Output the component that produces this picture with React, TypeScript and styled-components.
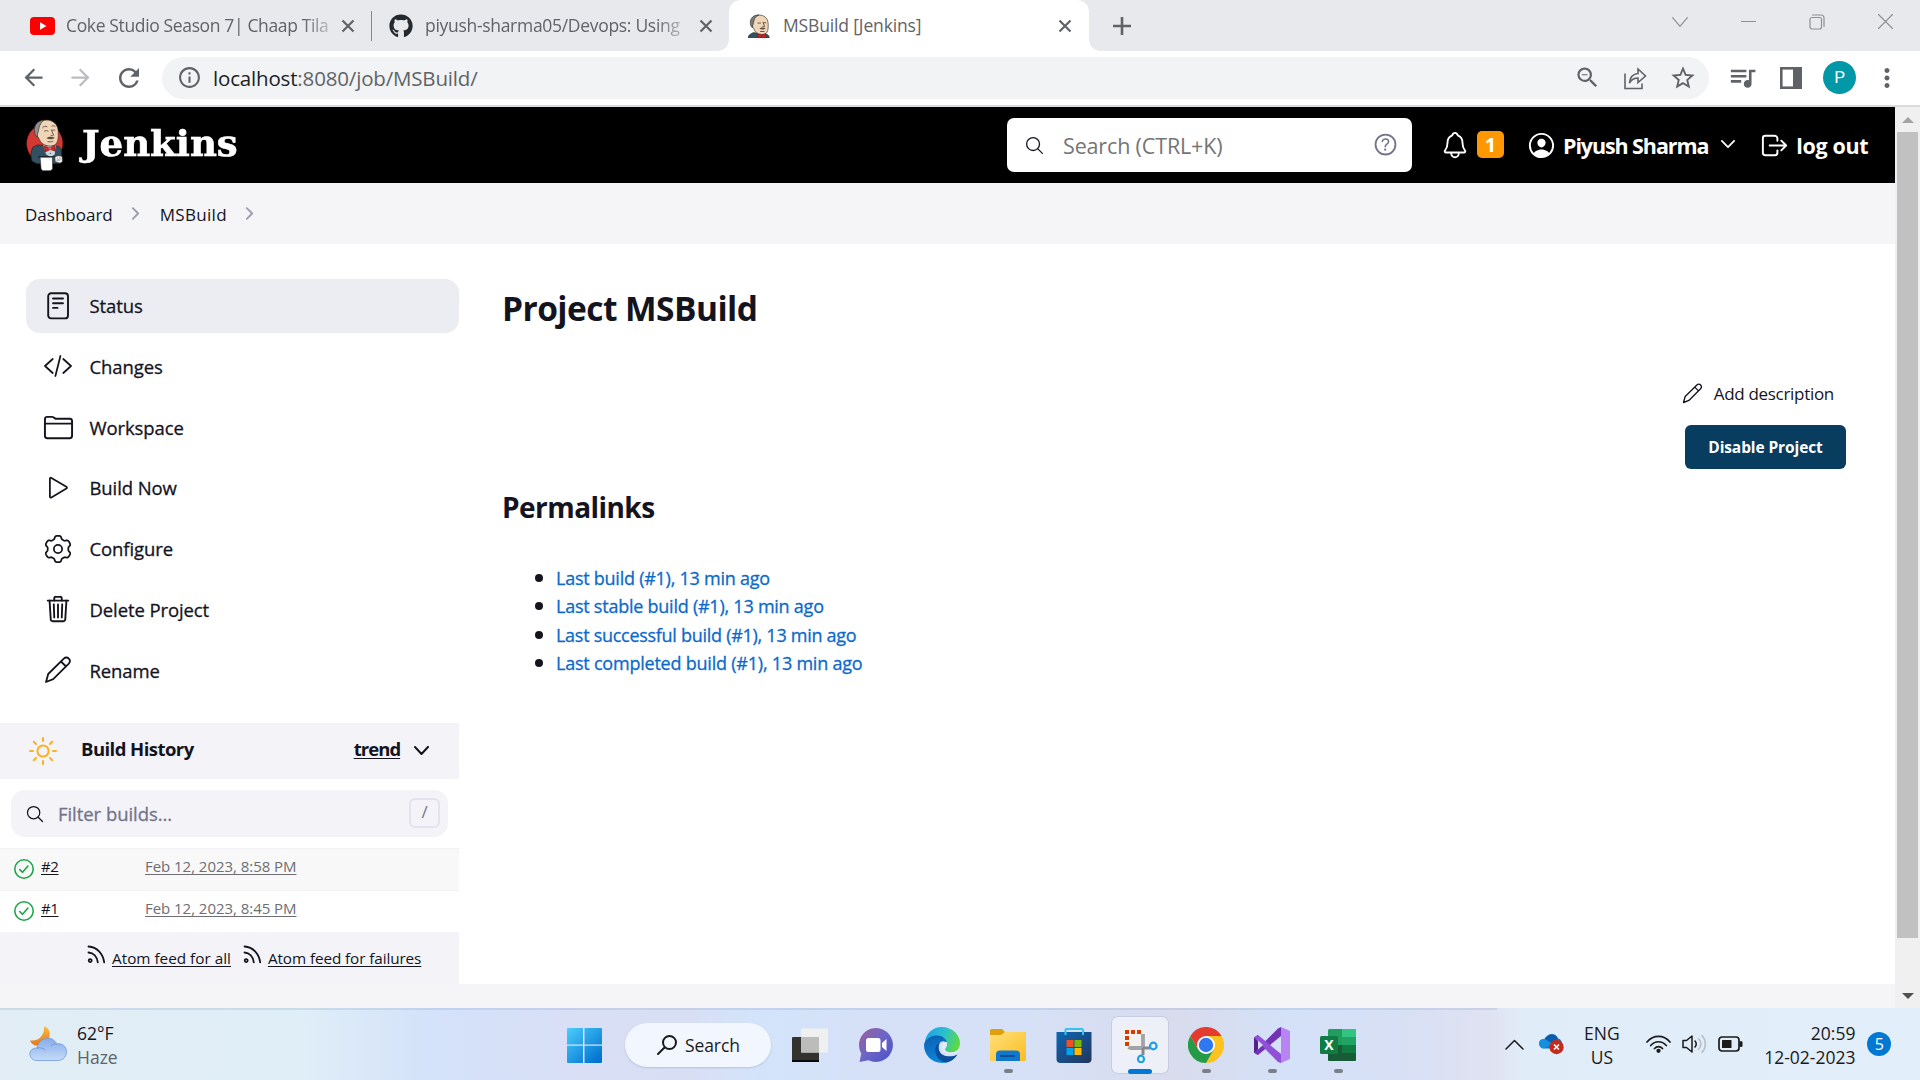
import React from 'react';
import styled, { createGlobalStyle } from 'styled-components';
import { IoFolderOutline, IoTrashOutline, IoSearchOutline, IoNotificationsOutline, IoPersonCircleOutline, IoLogOutOutline, IoHelpCircleOutline, IoChevronForward } from 'react-icons/io5';
import { MdArrowBack, MdArrowForward, MdRefresh, MdInfoOutline, MdStarBorder, MdQueueMusic, MdMoreVert, MdZoomOut } from 'react-icons/md';
import { FaGithub } from 'react-icons/fa';

const GlobalStyle = createGlobalStyle`
  * { box-sizing: border-box; }
  html, body { margin: 0; padding: 0; overflow: hidden; }
  body { font-family: "Open Sans", "Noto Sans", sans-serif; color: #14141f; background: #fff; }
  svg { display: block; flex: none; }
  a { color: inherit; }
`;

const Screen = styled.div`
  width: 1920px;
  height: 1080px;
  display: flex;
  flex-direction: column;
  overflow: hidden;
`;

interface LabelProps { $size: number; $weight?: number; $color?: string; $track?: number; $ml?: number; $mt?: number; $underline?: boolean; }
const Label = styled.span<LabelProps>`
  font-size: ${p => p.$size}px;
  font-weight: ${p => p.$weight ?? 400};
  color: ${p => p.$color ?? 'inherit'};
  letter-spacing: ${p => p.$track ?? 0}px;
  margin-left: ${p => p.$ml ?? 0}px;
  margin-top: ${p => p.$mt ?? 0}px;
  text-decoration: ${p => (p.$underline ? 'underline' : 'none')};
  text-decoration-thickness: 1px;
  text-underline-offset: 2px;
  white-space: nowrap;
  flex: none;
  ${p => p.$weight === 500 && '-webkit-text-stroke: .3px currentColor;'}
`;

const Slot = styled.span<{ $w: number; $ml?: number; $mt?: number }>`
  width: ${p => p.$w}px;
  margin-left: ${p => p.$ml ?? 0}px;
  margin-top: ${p => p.$mt ?? 0}px;
  flex: none;
  display: flex;
  align-items: center;
  justify-content: center;
`;

/* Browser chrome */
const TabStrip = styled.div`
  height: 51px;
  background: #e8e9ed;
  display: flex;
  color: #5f6368;
`;
const Tab = styled.div<{ $w: number; $pad: number; $active?: boolean }>`
  position: relative;
  width: ${p => p.$w}px;
  padding-left: ${p => p.$pad}px;
  display: flex;
  align-items: center;
  flex: none;
  background: ${p => (p.$active ? '#fff' : 'transparent')};
  border-radius: 12px 12px 0 0;
  &::before, &::after {
    content: '';
    display: ${p => (p.$active ? 'block' : 'none')};
    position: absolute;
    bottom: 0;
    width: 11px;
    height: 11px;
  }
  &::before { left: -11px; background: radial-gradient(circle at 0 0, transparent 10.5px, #fff 11px); }
  &::after { right: -11px; background: radial-gradient(circle at 100% 0, transparent 10.5px, #fff 11px); }
`;
const TabTitle = styled.div<{ $w: number; $ml: number; $track: number; $fade?: boolean }>`
  width: ${p => p.$w}px;
  margin-left: ${p => p.$ml}px;
  letter-spacing: ${p => p.$track}px;
  font-size: 17.5px;
  line-height: 27px;
  white-space: nowrap;
  flex: none;
  ${p => p.$fade && 'mask-image: linear-gradient(90deg, #000 89%, rgba(0,0,0,.25) 100%);'}
`;
const TabDivider = styled.i`
  width: 1px;
  height: 30px;
  margin-top: 11px;
  background: #85888c;
`;
const WindowControls = styled.div`
  margin-left: auto;
  height: 43px;
  padding-right: 27px;
  display: flex;
  align-items: center;
  gap: 53px;
  color: #8d9094;
`;
const Toolbar = styled.div`
  height: 56px;
  padding: 0 0 1px 20px;
  border-bottom: 2px solid #d9dadb;
  display: flex;
  align-items: center;
  color: #5f6368;
  background: #fff;
`;
const AddressBar = styled.div`
  width: 1547px;
  height: 42px;
  margin-left: 19px;
  padding-left: 13px;
  border-radius: 21px;
  background: #f1f3f4;
  display: flex;
  align-items: center;
  flex: none;
`;
const AddressIcons = styled.div`
  margin-left: auto;
  padding-right: 12px;
  display: flex;
  align-items: center;
  gap: 22px;
`;
const Avatar = styled.div`
  width: 33px;
  height: 33px;
  margin-left: 21px;
  border-radius: 50%;
  background: #0097a7;
  color: #fff;
  font: 17px/33px Roboto, sans-serif;
  text-align: center;
`;

/* Page viewport */
const Viewport = styled.div`
  height: 901px;
  display: flex;
`;
const Page = styled.div`
  width: 1895px;
  display: flex;
  flex-direction: column;
`;
const Header = styled.header`
  height: 76px;
  padding-left: 26px;
  background: #000;
  color: #fff;
  display: flex;
  align-items: center;
`;
const Wordmark = styled.span`
  width: 146px;
  margin: -3px 0 0 18px;
  font: 700 34.5px/50px "DejaVu Serif", serif;
  -webkit-text-stroke: .6px #fff;
  transform: scaleX(1.075);
  transform-origin: 0 50%;
`;
const SearchBox = styled.div`
  width: 405px;
  height: 54px;
  margin-left: auto;
  padding: 0 13px 0 17px;
  border-radius: 7px;
  background: #fff;
  color: #14141f;
  display: flex;
  align-items: center;
`;
const AccountBar = styled.div`
  width: 483px;
  padding-left: 29px;
  display: flex;
  align-items: center;
`;
const AlertBadge = styled.span`
  width: 27px;
  height: 27px;
  margin: -1px 0 0 8px;
  border-radius: 5px;
  background: #ff9800;
  font-size: 20px;
  font-weight: 700;
  line-height: 28px;
  text-align: center;
`;
const Breadcrumbs = styled.nav`
  height: 61px;
  padding: 1px 0 0 25px;
  background: #f5f5f8;
  display: flex;
  align-items: center;
`;
const Body = styled.div`
  height: 740px;
  display: flex;
`;
const PageFooter = styled.div`
  flex: 1;
  background: #f5f5f7;
`;

/* Side panel */
const SidePanel = styled.aside`
  width: 459px;
  padding-top: 35px;
  display: flex;
  flex-direction: column;
  flex: none;
`;
const TaskList = styled.div`
  height: 444px;
  padding-left: 26px;
  display: flex;
  flex-direction: column;
  gap: 6.8px;
`;
const Task = styled.a<{ $active?: boolean }>`
  width: 433px;
  height: 54px;
  padding-left: 18px;
  border-radius: 14px;
  background: ${p => (p.$active ? '#ecedf2' : 'transparent')};
  display: flex;
  align-items: center;
  flex: none;
`;
const HistoryHead = styled.div`
  height: 56px;
  padding: 0 31px 0 29px;
  background: #f3f3f8;
  display: flex;
  align-items: center;
  flex: none;
`;
const Filter = styled.div`
  width: 437px;
  height: 47px;
  margin: 11px;
  padding: 0 8px 0 14px;
  border-radius: 14px;
  background: #f3f3f8;
  display: flex;
  align-items: center;
  flex: none;
`;
const KeyHint = styled.kbd`
  width: 31px;
  height: 30px;
  margin: -1px 0 0 auto;
  border: 2px solid #e4e2ef;
  border-radius: 6px;
  color: #73738c;
  font: 500 17px/24px "Open Sans", sans-serif;
  text-align: center;
`;
const BuildRow = styled.div<{ $shade?: boolean }>`
  height: 42px;
  padding: 0 0 4px 14px;
  border-top: 1px solid #f2f2f4;
  background: ${p => (p.$shade ? '#f8f8f8' : '#fff')};
  display: flex;
  align-items: center;
  flex: none;
  svg { margin-top: 2px; }
`;
const BuildNumber = styled.div`
  width: 111px;
  padding-left: 7px;
  margin-top: -3px;
  line-height: 22px;
`;
const FeedBar = styled.div`
  height: 52px;
  padding-left: 87px;
  background: #f3f3f8;
  display: flex;
  align-items: center;
  flex: none;
`;

/* Main panel */
const MainPanel = styled.main`
  flex: 1;
  padding: 40px 49px 0 43px;
  display: flex;
  flex-direction: column;
`;
const Title = styled.h1`
  margin: 0;
  height: 50px;
  font-size: 33.5px;
  line-height: 49px;
  font-weight: 700;
  letter-spacing: -.55px;
`;
const Actions = styled.div`
  height: 135px;
  padding-top: 42px;
  display: flex;
  flex-direction: column;
  align-items: flex-end;
`;
const AddDescription = styled.a`
  height: 34px;
  padding-right: 12px;
  display: flex;
  align-items: center;
`;
const DisableButton = styled.button`
  width: 161px;
  height: 44px;
  margin-top: 15px;
  padding: 0;
  border: 0;
  border-radius: 6px;
  background: #083d60;
  color: #fff;
  font: 700 15.5px/44px "Open Sans", sans-serif;
  letter-spacing: -.1px;
  flex: none;
`;
const Subtitle = styled.h2`
  margin: 18px 0 1px;
  font-size: 28px;
  line-height: 40px;
  font-weight: 700;
  letter-spacing: -.55px;
`;
const Permalinks = styled.ul`
  margin: 36px 0 0;
  padding: 0 0 0 33px;
  list-style: none;
`;
const Permalink = styled.li`
  height: 28.3px;
  display: flex;
  align-items: center;
  &::before { content: ''; width: 8px; height: 8px; margin-right: 13px; border-radius: 50%; background: #14141f; }
`;

/* Scroll bar */
const ScrollTrack = styled.div`
  width: 25px;
  padding: 10px 0 9px;
  background: #f0f0f0;
  display: flex;
  flex-direction: column;
  align-items: center;
`;
const ScrollThumb = styled.div`
  width: 21px;
  height: 806px;
  margin-top: 9px;
  margin-bottom: auto;
  background: #c1c1c1;
`;

/* Taskbar */
const Taskbar = styled.footer`
  position: relative;
  height: 72px;
  display: flex;
  background: linear-gradient(90deg, #e2edf5 0, #dfeef7 300px, #d4e2fa 430px, #d8dff6 560px, #d8dff5 690px, #d3e4fa 760px, #d6e0f7 880px, #d6e1f8 1000px, #d8dced 1180px, #d4e1f8 1290px, #d8e0f5 1400px, #dfe2f1 1490px, #e0ecf7 1520px, #e2eef9 100%);
  &::before { content: ''; position: absolute; left: 0; top: 0; width: 1497px; height: 2px; background: rgba(120, 145, 190, .2); }
`;
const Weather = styled.div`
  width: 536px;
  padding-left: 29px;
  display: flex;
  align-items: center;
`;
const Stack = styled.div<{ $ml?: number; $align?: string }>`
  margin-left: ${p => p.$ml ?? 0}px;
  padding-top: 2px;
  display: flex;
  flex-direction: column;
  align-items: ${p => p.$align ?? 'flex-start'};
  line-height: 24px;
`;
const Apps = styled.div`
  width: 960px;
  padding-left: 15px;
  display: flex;
  align-items: center;
`;
const AppCell = styled.div<{ $active?: boolean; $mark?: boolean }>`
  position: relative;
  width: 56px;
  height: 56px;
  margin: 2px 5px 0;
  border-radius: 6px;
  flex: none;
  display: flex;
  align-items: center;
  justify-content: center;
  background: ${p => (p.$active ? 'rgba(255,255,255,.55)' : 'transparent')};
  box-shadow: ${p => (p.$active ? '0 0 0 1px rgba(160,170,200,.3)' : 'none')};
  &::after {
    content: '';
    position: absolute;
    bottom: ${p => (p.$active ? -1 : 0)}px;
    display: ${p => (p.$mark ? 'block' : 'none')};
    width: ${p => (p.$active ? 24 : 9)}px;
    height: ${p => (p.$active ? 5 : 4)}px;
    border-radius: 3px;
    background: ${p => (p.$active ? '#0078d4' : '#7b7f8a')};
  }
`;
const SearchPill = styled.div`
  width: 146px;
  height: 44px;
  margin: 2px 6px 0 8px;
  padding-left: 32px;
  border-radius: 22px;
  background: #f2f6fe;
  box-shadow: 0 1px 2px rgba(120, 135, 180, .35);
  display: flex;
  align-items: center;
  color: #1b1b1b;
  flex: none;
`;
const Tray = styled.div`
  flex: 1;
  padding: 0 20px 0 9px;
  display: flex;
  align-items: center;
  color: #1b1b1b;
`;
const NoticeCount = styled.span`
  width: 24px;
  height: 24px;
  margin-left: 12px;
  border-radius: 50%;
  background: #0078d4;
  color: #fff;
  font-size: 16px;
  line-height: 24px;
  text-align: center;
`;

const Butler = ({ w, h, box }: { w: number; h: number; box: string }) => (
  <svg width={w} height={h} viewBox={box}>
    <ellipse cx="18.700" cy="25" rx="18.500" ry="19.500" fill="#d33833" stroke="#3a1210" strokeWidth=".5" />
    <path d="M11 26.500 6.500 29c-2 4-2 9-1.200 13 1.500 2 4 3 6.500 3.500H33c2-3 3.500-8 3-13-.5-2.500-2-4.500-5-5z" fill="#335061" stroke="#1a2229" strokeWidth=".7" />
    <path d="M21 27.500 17 26l3 10 5 3 4-3 1-9z" fill="#c9d6dc" />
    <path d="M12 4C15.500.8 22 .2 26.500 2.500c4.500 2.500 6 6.500 6 11 .2 4.500 0 8-1.500 10.800-1.500 2.700-4.500 3.500-8 3.200-5-.4-9-3.500-10.500-8.500-1-.8-2.500-3.500-1.500-5z" fill="#f0d6b7" stroke="#3d3129" strokeWidth=".7" />
    <path d="M18 1.200C11.500 1.500 8.300 6 8.200 11c0 3 .8 6 2.800 7.500.4-1.800.2-3.500.9-4.800.8-2.200.6-4.500 1.800-7C14.700 4.300 16 2.700 18 1.200z" fill="#8f8f90" stroke="#333" strokeWidth=".7" />
    <path d="M16.500 9c1.500-1.800 3-2 4.500-1.200M26 7.200c1-.6 2.200-.4 3.200.4M18.500 12.300c1.200-.6 2.400-.6 3.600 0M26.500 11.500c.9-.4 1.800-.3 2.600 0M25.500 11l2.200 5.500c-.6.6-1.600.6-2.600.2M22 23c1.800.6 3.500.5 5-.3" fill="none" stroke="#4a3a30" strokeWidth=".8" strokeLinecap="round" />
    <path d="M20.500 19.500c2-1.700 5.500-2 8.500-.5-2 1.700-5 2.200-8.500.5z" fill="#5b5048" />
    <path d="M18 27.300l5.500 2 5.500-2.300.6 5.800-5-1.600-5.400 2.300z" fill="#d81f26" stroke="#5b1013" strokeWidth=".5" />
    <circle cx="24" cy="30" r="1.500" fill="#f0524f" /><circle cx="24.500" cy="35" r=".7" fill="#335061" />
    <path d="M12 38.500h18" stroke="#14232e" strokeWidth="1.200" />
    <path d="M14 39h12.500l.3 12-2.300 1.700h-7.800L15 51z" fill="#fff" stroke="#262626" strokeWidth=".6" />
    <path d="M29 38.500c2.500-1.500 6-1.500 7.500 0l.3 5-2.500 1.500-5-1.500z" fill="#f3f1ee" stroke="#303030" strokeWidth=".7" />
    <path d="M31.500 39.500l1 2M34 39l.5 2.500M30.500 42h4" stroke="#777" strokeWidth=".6" />
  </svg>
);
/* Head and bow tie only, without the red backdrop */
const ButlerFavicon = () => (
  <svg width="22" height="24" viewBox="5 0 30 32">
    <path d="M12 25 7 28c-1.500 1.500-2 3-2 5h29c0-3-1-5-4-6z" fill="#335061" stroke="#1a2229" strokeWidth=".7" />
    <path d="M12 4C15.500.8 22 .2 26.500 2.500c4.500 2.500 6 6.500 6 11 .2 4.500 0 8-1.500 10.800-1.500 2.700-4.500 3.500-8 3.200-5-.4-9-3.500-10.500-8.500-1-.8-2.500-3.500-1.500-5z" fill="#f0d6b7" stroke="#3d3129" strokeWidth=".9" />
    <path d="M20 1C11.500 1 8.300 6 8.200 11c0 3 .8 6 2.800 7.500.4-1.800.2-3.500.9-4.800.8-2.200.6-4.500 1.800-7C14.700 4.300 17 2.500 20 1z" fill="#7b7b7c" stroke="#333" strokeWidth=".9" />
    <path d="M18.500 12h3.600M26.500 11.500h2.600M25.500 11l2.200 5.500c-.6.600-1.600.6-2.600.2M22 23.500h5" fill="none" stroke="#4a3a30" strokeWidth="1.100" strokeLinecap="round" />
    <path d="M20.500 19.800c2-2 5.500-2.300 8.500-.6-2 1.900-5 2.400-8.500.6z" fill="#5b5048" />
    <path d="M18 26.500l5.500 2.200 5.500-2.500.8 6.300-5-1.600-6 1.600z" fill="#d81f26" stroke="#5b1013" strokeWidth=".5" />
  </svg>
);

const YouTube = () => (
  <svg width="25" height="18" viewBox="0 0 25 18"><rect width="25" height="18" rx="4" fill="#f00" /><path d="M10 5.200v7.600L16.500 9z" fill="#fff" /></svg>
);

const line = { fill: 'none', stroke: 'currentColor', strokeLinecap: 'round', strokeLinejoin: 'round' } as const;

const CloseIcon = () => (
  <svg width="14" height="14" viewBox="0 0 14 14" {...line} strokeLinecap="butt" strokeWidth="2.200"><path d="M1.500 1.500l11 11M12.500 1.500l-11 11" /></svg>
);
const PlusIcon = () => (
  <svg width="18" height="18" viewBox="0 0 18 18" {...line} strokeWidth="2.600" strokeLinecap="butt"><path d="M9 0v18M0 9h18" /></svg>
);
const StatusIcon = () => (
  <svg width="28" height="28" viewBox="0 0 28 28" {...line} strokeWidth="1.900"><rect x="4.200" y="1.200" width="19.800" height="25.200" rx="3" /><path d="M9 6.500h10M9 11.200h10M9 15.900h4.500" /></svg>
);
const CodeIcon = () => (
  <svg width="28" height="28" viewBox="0 0 28 28" {...line} strokeWidth="1.750"><path d="M8.700 7 1 14l7.700 7M19.300 7 27 14l-7.700 7M16.400 4l-5 20" /></svg>
);
const PlayIcon = () => (
  <svg width="28" height="28" viewBox="0 0 28 28" {...line} strokeWidth="1.750"><path d="M5.900 4.700v18c0 .8.800 1.200 1.500.8l15-8.900c.7-.4.700-1.400 0-1.800l-15-8.900c-.7-.4-1.500 0-1.500.8z" /></svg>
);
const gearPath = Array.from({ length: 121 }, (_, i) => {
  const t = (i / 120) * Math.PI * 2;
  const r = 11.7 + 1.45 * (Math.tanh(2.2 * Math.cos(6 * t) + 0.3) / Math.tanh(2.5));
  return `${i ? 'L' : 'M'}${(14 + r * Math.sin(t)).toFixed(2)} ${(14 - r * Math.cos(t)).toFixed(2)}`;
}).join('') + 'Z';
const GearIcon = () => (
  <svg width="28" height="28" viewBox="0 0 28 28" {...line} strokeWidth="1.750"><path d={gearPath} /><circle cx="14" cy="14" r="4.100" /></svg>
);
const PencilIcon = ({ size = 28 }: { size?: number }) => (
  <svg width={size} height={size} viewBox="0 0 28 28" {...line} strokeWidth="1.800"><path d="M2 26l2.200-8L19.800 2.600c1.500-1.500 3.600-1.500 5 0s1.400 3.500 0 5L9.200 23.200zM17 5.500l5 5" /></svg>
);
const SunIcon = () => (
  <svg width="28" height="28" viewBox="0 0 28 28" {...line} stroke="#ffb020" strokeWidth="2"><circle cx="14" cy="14" r="5.600" /><path d="M14 1v3M14 24v3M1 14h3M24 14h3M4.800 4.800l2.200 2.200M21 21l2.200 2.200M4.800 23.200 7 21M21 7l2.200-2.200" /></svg>
);
const Chevron = ({ w, h, sw }: { w: number; h: number; sw: number }) => (
  <svg width={w} height={h} viewBox={`0 0 ${w} ${h}`} {...line} strokeWidth={sw}><path d={`M${sw / 2} ${sw / 2}L${w / 2} ${h - sw / 2}L${w - sw / 2} ${sw / 2}`} /></svg>
);
const CheckIcon = () => (
  <svg width="20" height="20" viewBox="0 0 20 20" {...line} stroke="#1ea64b" strokeWidth="1.600"><circle cx="10" cy="10" r="9.200" /><path d="M5.800 10.600l2.800 2.700 5.300-6.300" /></svg>
);
const FeedIcon = () => (
  <svg width="19" height="19" viewBox="0 0 19 19" {...line} strokeWidth="1.800"><circle cx="3.200" cy="15.600" r="1.500" /><path d="M1.500 7.500c5 .3 8.600 4.300 9.300 9.800M1.500 1.500C10 2 16 8.500 17.200 17.300" /></svg>
);

const CloudMoon = () => (
  <svg width="38" height="36" viewBox="0 0 38 36">
    <defs>
      <linearGradient id="cloud" x1="0" y1="0" x2="0" y2="1"><stop offset="0" stopColor="#86abe8" /><stop offset="1" stopColor="#c5dcf9" /></linearGradient>
      <linearGradient id="moon" x1="0" y1="0" x2="0" y2="1"><stop offset="0" stopColor="#f9bc3c" /><stop offset="1" stopColor="#e7791b" /></linearGradient>
    </defs>
    <path d="M15 .5c5 1 7 6.500 5 11.500-2.500 6-10 9-15 7C3 18 1.500 16 1 14.500c5 .5 9-1 11.500-4.500C14.500 7 15.500 4 15 .5z" fill="url(#moon)" />
    <path d="M8 34.500c-9.500 0-9.500-13 0-12.500C10 10.500 24 9 27.500 18 40 15.500 41 34 29 34.500z" fill="url(#cloud)" stroke="#6f97dc" strokeWidth=".8" />
    <path d="M8 22c4-.5 6 0 8.500 2.500M22 20c2-2 3-2.500 6-2" fill="none" stroke="#7298dc" />
  </svg>
);
const WindowsLogo = () => (
  <svg width="36" height="36" viewBox="0 0 36 36">
    <defs><linearGradient id="win" gradientUnits="userSpaceOnUse" x1="0" y1="0" x2="32" y2="34"><stop offset="0" stopColor="#4fd0fd" /><stop offset="1" stopColor="#0073d0" /></linearGradient></defs>
    <path d="M1 2a1 1 0 0 1 1-1h15v16.500H1zM18.500 1H35a1 1 0 0 1 1 1v15.500H18.500zM1 18.700h16V36H2a1 1 0 0 1-1-1zM18.500 18.700H36V35a1 1 0 0 1-1 1H18.500z" fill="url(#win)" />
  </svg>
);
const TaskView = () => (
  <svg width="36" height="34" viewBox="0 0 36 34"><rect y="9" width="27" height="25" rx="1" fill="#33322f" /><rect y="32" width="27" height="2" fill="#0a0a0a" /><rect x="9" y=".5" width="27" height="24" rx="1" fill="#f0f0f0" /><rect x="9" y="9" width="18" height="15.500" fill="#bcbcba" /></svg>
);
const ChatIcon = () => (
  <svg width="36" height="36" viewBox="0 0 36 36">
    <defs><linearGradient id="chat" x1=".1" y1=".2" x2=".8" y2=".9"><stop offset="0" stopColor="#9060a8" /><stop offset=".45" stopColor="#6f66c6" /><stop offset="1" stopColor="#5257c8" /></linearGradient></defs>
    <path d="M18 1a17 17 0 1 1-7.500 32.300L1.500 35l1.800-8.500A17 17 0 0 1 18 1z" fill="url(#chat)" />
    <rect x="8" y="11" width="14.500" height="14" rx="2.500" fill="#fff" /><path d="M24 16l4.500-4v12L24 20z" fill="#fff" />
  </svg>
);
const EdgeIcon = () => (
  <svg width="36" height="36" viewBox="0 0 36 36">
    <defs>
      <linearGradient id="edgeTop" x1="0" y1=".3" x2="1" y2=".6"><stop offset="0" stopColor="#1aa2e8" /><stop offset=".5" stopColor="#2cc0cc" /><stop offset="1" stopColor="#5fdb3c" /></linearGradient>
      <linearGradient id="edgeBody" x1="0" y1="0" x2=".4" y2="1"><stop offset="0" stopColor="#0d5fb0" /><stop offset="1" stopColor="#0a88e0" /></linearGradient>
    </defs>
    <path d="M.6 16C2 6 9 0 18 0c10.500 0 18 8 18 16 0 6-4 9.500-9 9.500-5.500 0-7-2.500-5.500-4.500C24 17 20 12 14 12 8 12 3 14 .6 16z" fill="url(#edgeTop)" />
    <path d="M.1 17C2 11 8 8.500 13 8.500c6 0 9 3.500 9.800 6.500-7-2.500-9 3-8 7C16 29 24 32.500 33 28c-3 5-8.500 8-15 8C7 36-.6 27 .1 17z" fill="url(#edgeBody)" />
    <path d="M12 19c-3 8 3 16 10 16.500 5-1 9-4 11.500-8C27 31 15 30 14.500 21c0-2 .5-4 1.500-5-2 .5-3.300 1.500-4 3z" fill="#0b4f9c" />
    <path d="M22.700 15c1 2.500.3 4.500-1.200 6-1.500 2 .5 4.500 5.500 4.500 2.500 0 4.600-.8 7.200-2.200-1 3.300-3.500 3.700-7.200 3.700-6 0-9-3-9-7 0-2.500 2-5 4.700-5z" fill="#e3ebfb" />
  </svg>
);
const FolderIcon = () => (
  <svg width="36" height="34" viewBox="0 0 36 34">
    <defs><linearGradient id="folder" x1="0" y1="0" x2="1" y2="1"><stop offset="0" stopColor="#ffe07a" /><stop offset="1" stopColor="#fbbd24" /></linearGradient></defs>
    <path d="M0 2.500A1.500 1.500 0 0 1 1.500 1H12l3 3h19.500A1.500 1.500 0 0 1 36 5.500V20H0z" fill="#dfa00c" /><path d="M0 7h11l4-3h19.500A1.500 1.500 0 0 1 36 5.500V32a1 1 0 0 1-1 1H1a1 1 0 0 1-1-1z" fill="url(#folder)" />
    <path d="M6 33V26.500a4 4 0 0 1 4-4h16a4 4 0 0 1 4 4V33z" fill="#0f78cc" /><rect x="10" y="27" width="15" height="2" rx="1" fill="#0a4f92" />
  </svg>
);
const StoreIcon = () => (
  <svg width="36" height="36" viewBox="0 0 36 36">
    <defs><linearGradient id="store" x1="0" y1="0" x2="1" y2="1"><stop offset="0" stopColor="#0c66b4" /><stop offset="1" stopColor="#24365c" /></linearGradient></defs>
    <path d="M.5 5h35v27a4 4 0 0 1-4 4h-27a4 4 0 0 1-4-4z" fill="url(#store)" />
    <path d="M9.500 8V3a1 1 0 0 1 1-1H26a1 1 0 0 1 1 1v5" fill="none" stroke="#35c3f3" strokeWidth="2" />
    <path d="M10.500 13h7v7h-7z" fill="#f25022" /><path d="M18.500 13h7v7h-7z" fill="#7fba00" /><path d="M10.500 21h7v7h-7z" fill="#00a4ef" /><path d="M18.500 21h7v7h-7z" fill="#ffb900" />
  </svg>
);
const SnipIcon = () => (
  <svg width="36" height="36" viewBox="0 0 36 36">
    <rect width="26" height="26" y="1" fill="#f1f1f2" rx="2" />
    <path d="M3 3h4v4H3zM9 3h4v4H9zM15 3h4v4h-4zM3 9h4v4H3zM3 15h4v4H3z" fill="#d83b01" />
    <path d="M21 7v14.500M21 21H9c-1 0-2-.5-2.500-1" fill="none" stroke="#a0a3a8" strokeWidth="3.800" /><path d="M21 21v7M21 21h7" stroke="#85898f" strokeWidth="3" />
    <circle cx="31.300" cy="19" r="3.300" fill="none" stroke="#1ba0e6" strokeWidth="2.200" /><ellipse cx="19" cy="32" rx="3" ry="3.300" fill="none" stroke="#1ba0e6" strokeWidth="2.200" />
  </svg>
);
const ChromeIcon = () => (
  <svg width="36" height="36" viewBox="0 0 36 36">
    <path d="M2.400 9A18 18 0 0 1 33.600 9H18z" fill="#e33b2e" /><path d="M33.600 9A18 18 0 0 1 18 36l7.800-13.500L25.800 9z" fill="#fcc31e" /><path d="M2.400 9A18 18 0 0 0 18 36l7.800-13.500L10.200 22.500z" fill="#259a47" />
    <path d="M2.400 9 10.200 22.500 18 9z" fill="#e33b2e" /><path d="M18 9h16l-8 14z" fill="#fcc31e" /><circle cx="18" cy="18" r="9" fill="#fff" /><circle cx="18" cy="18" r="7.200" fill="#2f78f0" />
  </svg>
);
const StudioIcon = () => (
  <svg width="36" height="36" viewBox="0 0 36 36">
    <path d="M0 10.500 4 8v20l-4-2.500z" fill="#52218f" /><path d="M0 25.500 24 1.500 27 0v9L4 28z" fill="#7233b5" /><path d="M0 10.500 4 8l23 19v9l-3-1z" fill="#9150d8" /><path d="M27 0l9 4v28l-9 4z" fill="#b884f2" />
    <path d="M4 13.500v9L9 18z" fill="#d7def3" />
  </svg>
);
const ExcelIcon = () => (
  <svg width="36" height="36" viewBox="0 0 36 36">
    <rect x="8" y="2" width="28" height="32" rx="1.500" fill="#1f9e5f" /><path d="M22 2h12.500A1.500 1.500 0 0 1 36 3.500V10H22z" fill="#33c481" /><path d="M8 18h28v14.500a1.500 1.500 0 0 1-1.500 1.500h-25A1.500 1.500 0 0 1 8 32.500z" fill="#185c37" /><path d="M22 18h14v8H22z" fill="#107c41" /><path d="M22 10h14v8H22z" fill="#21a366" />
    <rect y="9" width="18" height="18" rx="1.500" fill="#107c41" /><text x="9" y="23" fill="#fff" fontFamily="Open Sans, sans-serif" fontSize="14" fontWeight="700" textAnchor="middle">X</text>
  </svg>
);

const tasks: [string, React.ReactNode][] = [
  ['Status', <StatusIcon />],
  ['Changes', <CodeIcon />],
  ['Workspace', <IoFolderOutline size={31} />],
  ['Build Now', <PlayIcon />],
  ['Configure', <GearIcon />],
  ['Delete Project', <IoTrashOutline size={30} />],
  ['Rename', <PencilIcon />],
];
const permalinks: [string, number][] = [
  ['Last build (#1), 13 min ago', -0.25],
  ['Last stable build (#1), 13 min ago', -0.24],
  ['Last successful build (#1), 13 min ago', -0.28],
  ['Last completed build (#1), 13 min ago', -0.22],
];
const builds = [
  { n: '#2', date: 'Feb 12, 2023, 8:58 PM' },
  { n: '#1', date: 'Feb 12, 2023, 8:45 PM' },
];

export default function App() {
  return (
    <Screen>
      <GlobalStyle />
      <TabStrip>
        <Tab $w={371} $pad={30}>
          <YouTube />
          <TabTitle $w={266} $ml={11} $track={-0.36} $fade>Coke Studio Season 7| Chaap Tila</TabTitle>
          <Slot $w={20} $ml={6}><CloseIcon /></Slot>
        </Tab>
        <TabDivider />
        <Tab $w={357} $pad={17}>
          <FaGithub size={24} color="#24292f" />
          <TabTitle $w={260} $ml={12} $track={-0.3} $fade>piyush-sharma05/Devops: Using</TabTitle>
          <Slot $w={20} $ml={11}><CloseIcon /></Slot>
        </Tab>
        <Tab $w={360} $pad={19} $active>
          <ButlerFavicon />
          <TabTitle $w={262} $ml={13} $track={-0.15}>MSBuild [Jenkins]</TabTitle>
          <Slot $w={20} $ml={10}><CloseIcon /></Slot>
        </Tab>
        <Slot $w={30} $ml={18}><PlusIcon /></Slot>
        <WindowControls>
          <Chevron w={16} h={10} sw={1.2} />
          <svg width="15" height="15" viewBox="0 0 15 15" {...line} strokeWidth="1.200"><path d="M0 7.500h15" /></svg>
          <svg width="16" height="16" viewBox="0 0 16 16" {...line} strokeWidth="1.200"><rect x="1" y="3.500" width="11.500" height="11.500" rx="2" /><path d="M3.500 1h8.500a3 3 0 0 1 3 3v8.500" /></svg>
          <svg width="15" height="15" viewBox="0 0 15 15" {...line} strokeWidth="1.200"><path d="M.5.500l14 14M14.500.500l-14 14" /></svg>
        </WindowControls>
      </TabStrip>
      <Toolbar>
        <Slot $w={26}><MdArrowBack size={27} /></Slot>
        <Slot $w={26} $ml={21}><MdArrowForward size={27} color="#bbbdbf" /></Slot>
        <Slot $w={28} $ml={22}><MdRefresh size={30} /></Slot>
        <AddressBar>
          <Slot $w={28}><MdInfoOutline size={25} /></Slot>
          <Label $size={20.5} $ml={10} $track={-0.17} $color="#202124">localhost</Label><Label $size={20.5} $track={-0.17}>:8080/job/MSBuild/</Label>
          <AddressIcons>
            <MdZoomOut size={27} />
            <svg width="24" height="24" viewBox="0 0 24 24" {...line} strokeWidth="1.600" strokeLinejoin="miter"><path d="M2 8v14.500h17V18M6.500 17c.5-6 3.500-9 8.500-9.500V3l7.500 7-7.500 6.500v-4.500c-4 0-6.500 1.500-8.500 5z" /></svg>
            <MdStarBorder size={28} />
          </AddressIcons>
        </AddressBar>
        <Slot $w={30} $ml={18}><MdQueueMusic size={31} /></Slot>
        <Slot $w={22} $ml={23}><svg width="22" height="22" viewBox="0 0 22 22"><rect x="1.300" y="1.300" width="19.400" height="19.400" fill="none" stroke="currentColor" strokeWidth="2.600" /><rect x="13" y="1" width="8" height="20" fill="currentColor" /></svg></Slot>
        <Avatar>P</Avatar>
        <Slot $w={28} $ml={17}><MdMoreVert size={30} /></Slot>
      </Toolbar>
      <Viewport>
        <Page>
          <Header>
            <Butler w={38} h={53} box="0 0 38 54" />
            <Wordmark>Jenkins</Wordmark>
            <SearchBox>
              <IoSearchOutline size={21} />
              <Label $size={21.5} $ml={18} $track={-0.15} $color="#757575">Search (CTRL+K)</Label>
              <Slot $w={28} $ml={149} $mt={-1}><IoHelpCircleOutline size={29} color="#73738c" /></Slot>
            </SearchBox>
            <AccountBar>
              <Slot $w={28}><IoNotificationsOutline size={30} /></Slot>
              <AlertBadge>1</AlertBadge>
              <Slot $w={28} $ml={23}><IoPersonCircleOutline size={31} /></Slot>
              <Label $size={21.5} $weight={700} $ml={8} $track={-1.1}>Piyush Sharma</Label>
              <Slot $w={14} $ml={13} $mt={-2}><Chevron w={14} h={8} sw={1.7} /></Slot>
              <Slot $w={29} $ml={25}><IoLogOutOutline size={31} /></Slot>
              <Label $size={21.5} $weight={700} $ml={7} $track={-0.35}>log out</Label>
            </AccountBar>
          </Header>
          <Breadcrumbs>
            <Label $size={17}>Dashboard</Label>
            <Slot $w={16} $ml={15} $mt={-2}><IoChevronForward size={19} color="#9a9ab0" /></Slot>
            <Label $size={17} $ml={16} $track={0.3}>MSBuild</Label>
            <Slot $w={16} $ml={15} $mt={-2}><IoChevronForward size={19} color="#9a9ab0" /></Slot>
          </Breadcrumbs>
          <Body>
            <SidePanel>
              <TaskList>
                {tasks.map(([name, icon], i) => (
                  <Task key={name} $active={i === 0}>
                    <Slot $w={28} $mt={-1}>{icon}</Slot>
                    <Label $size={18.5} $weight={500} $ml={17.5} $mt={-1} $track={-0.1}>{name}</Label>
                  </Task>
                ))}
              </TaskList>
              <HistoryHead>
                <SunIcon />
                <Label $size={18.5} $weight={700} $ml={24} $mt={-6} $track={-0.55}>Build History</Label>
                <Label $size={18.5} $weight={700} $ml={160} $mt={-6} $track={-0.95} $underline>trend</Label>
                <Slot $w={15} $ml={14} $mt={-1}><Chevron w={15} h={9} sw={2} /></Slot>
              </HistoryHead>
              <Filter>
                <IoSearchOutline size={20} />
                <Label $size={18.5} $weight={500} $color="#73738c" $ml={13} $track={-0.05}>Filter builds...</Label>
                <KeyHint>/</KeyHint>
              </Filter>
              {builds.map((b, i) => (
                <BuildRow key={b.n} $shade={i === 0}>
                  <CheckIcon />
                  <BuildNumber><Label $size={15} $track={-0.4} $underline>{b.n}</Label></BuildNumber>
                  <Label $size={15} $mt={-3} $color="#6e6e73" $track={-0.04} $underline>{b.date}</Label>
                </BuildRow>
              ))}
              <FeedBar>
                <Slot $w={19} $mt={-7}><FeedIcon /></Slot>
                <Label $size={15.3} $ml={6} $underline>Atom feed for all</Label>
                <Slot $w={19} $ml={12} $mt={-7}><FeedIcon /></Slot>
                <Label $size={15.3} $ml={6} $track={-0.1} $underline>Atom feed for failures</Label>
              </FeedBar>
            </SidePanel>
            <MainPanel>
              <Title>Project MSBuild</Title>
              <Actions>
                <AddDescription>
                  <PencilIcon size={21} />
                  <Label $size={17} $ml={11} $track={-0.3}>Add description</Label>
                </AddDescription>
                <DisableButton>Disable Project</DisableButton>
              </Actions>
              <Subtitle>Permalinks</Subtitle>
              <Permalinks>
                {permalinks.map(([text, track]) => (
                  <Permalink key={text}><Label $size={18} $weight={500} $color="#0b6acb" $track={track}>{text}</Label></Permalink>
                ))}
              </Permalinks>
            </MainPanel>
          </Body>
          <PageFooter />
        </Page>
        <ScrollTrack>
          <svg width="12" height="6" viewBox="0 0 12 6"><path d="M6 0l6 6H0z" fill="#a3a3a3" /></svg>
          <ScrollThumb />
          <svg width="12" height="6" viewBox="0 0 12 6"><path d="M6 6l6-6H0z" fill="#505050" /></svg>
        </ScrollTrack>
      </Viewport>
      <Taskbar>
        <Weather>
          <CloudMoon />
          <Stack $ml={10}>
            <Label $size={17.5}>62°F</Label>
            <Label $size={17.5} $color="#5d6469">Haze</Label>
          </Stack>
        </Weather>
        <Apps>
          <AppCell><WindowsLogo /></AppCell>
          <SearchPill>
            <svg width="20" height="20" viewBox="0 0 20 20" {...line} strokeWidth="2"><circle cx="12.500" cy="7.500" r="6.500" /><path d="M7.500 12.500 1 19" /></svg>
            <Label $size={17.5} $ml={8} $track={-0.1}>Search</Label>
          </SearchPill>
          <AppCell><TaskView /></AppCell>
          <AppCell><ChatIcon /></AppCell>
          <AppCell><EdgeIcon /></AppCell>
          <AppCell $mark><FolderIcon /></AppCell>
          <AppCell><StoreIcon /></AppCell>
          <AppCell $active $mark><SnipIcon /></AppCell>
          <AppCell $mark><ChromeIcon /></AppCell>
          <AppCell $mark><StudioIcon /></AppCell>
          <AppCell $mark><ExcelIcon /></AppCell>
        </Apps>
        <Tray>
          <svg width="19" height="11" viewBox="0 0 19 11" {...line} strokeWidth="1.500"><path d="M1 10 9.500 1.500 18 10" /></svg>
          <Slot $w={25} $ml={15}>
            <svg width="25" height="22" viewBox="0 0 25 22"><path d="M5 15.500c-7-1-6-9.500.5-9.500C9 0 16.500-.5 19 5.500c5 .5 5 9 0 10z" fill="#0f78d4" /><path d="M5.500 6C9 0 16.500-.5 19 5.500L12 10z" fill="#0a5cad" /><path d="M0 10c0-3 3-4.500 6-4l7 4.500-8 5c-3 0-5-2-5-5.500z" fill="#1490df" /><circle cx="17.500" cy="14" r="7.200" fill="#c42b1c" /><path d="M15 11.500l5 5M20 11.500l-5 5" stroke="#fff" strokeWidth="1.600" /></svg>
          </Slot>
          <Stack $ml={20} $align="center">
            <Label $size={17.5}>ENG</Label>
            <Label $size={17.5}>US</Label>
          </Stack>
          <Slot $w={25} $ml={26}>
            <svg width="25" height="18" viewBox="0 0 25 18" {...line} strokeWidth="1.700"><path d="M1 7C7.500-.6 17.500-.6 24 7M4.700 10.500c4.600-5 11-5 15.600 0M8.500 13.500c2.300-2.500 5.700-2.500 8 0" /><circle cx="12.500" cy="15.800" r="1.300" fill="currentColor" /></svg>
          </Slot>
          <Slot $w={25} $ml={11}>
            <svg width="25" height="20" viewBox="0 0 25 20" {...line} strokeWidth="1.500"><path d="M1 6.500v7h3.500L10 18V2L4.500 6.500zM13 7c1.500 1.800 1.500 4.200 0 6" /><path d="M16.500 4.500c3 3.500 3 7.500 0 11M20 1.500c4.500 5 4.500 12 0 17" stroke="#b6bfc8" /></svg>
          </Slot>
          <Slot $w={25} $ml={11}>
            <svg width="25" height="16" viewBox="0 0 25 16" {...line} strokeWidth="1.700"><rect x="1" y="1" width="20" height="14" rx="3" /><rect x="4" y="4" width="9.500" height="8" rx=".5" fill="currentColor" stroke="none" /><path d="M23 6.500v3" strokeWidth="3" /></svg>
          </Slot>
          <Stack $ml={21.5} $align="flex-end">
            <Label $size={17.5}>20:59</Label>
            <Label $size={17.5}>12-02-2023</Label>
          </Stack>
          <NoticeCount>5</NoticeCount>
        </Tray>
      </Taskbar>
    </Screen>
  );
}
